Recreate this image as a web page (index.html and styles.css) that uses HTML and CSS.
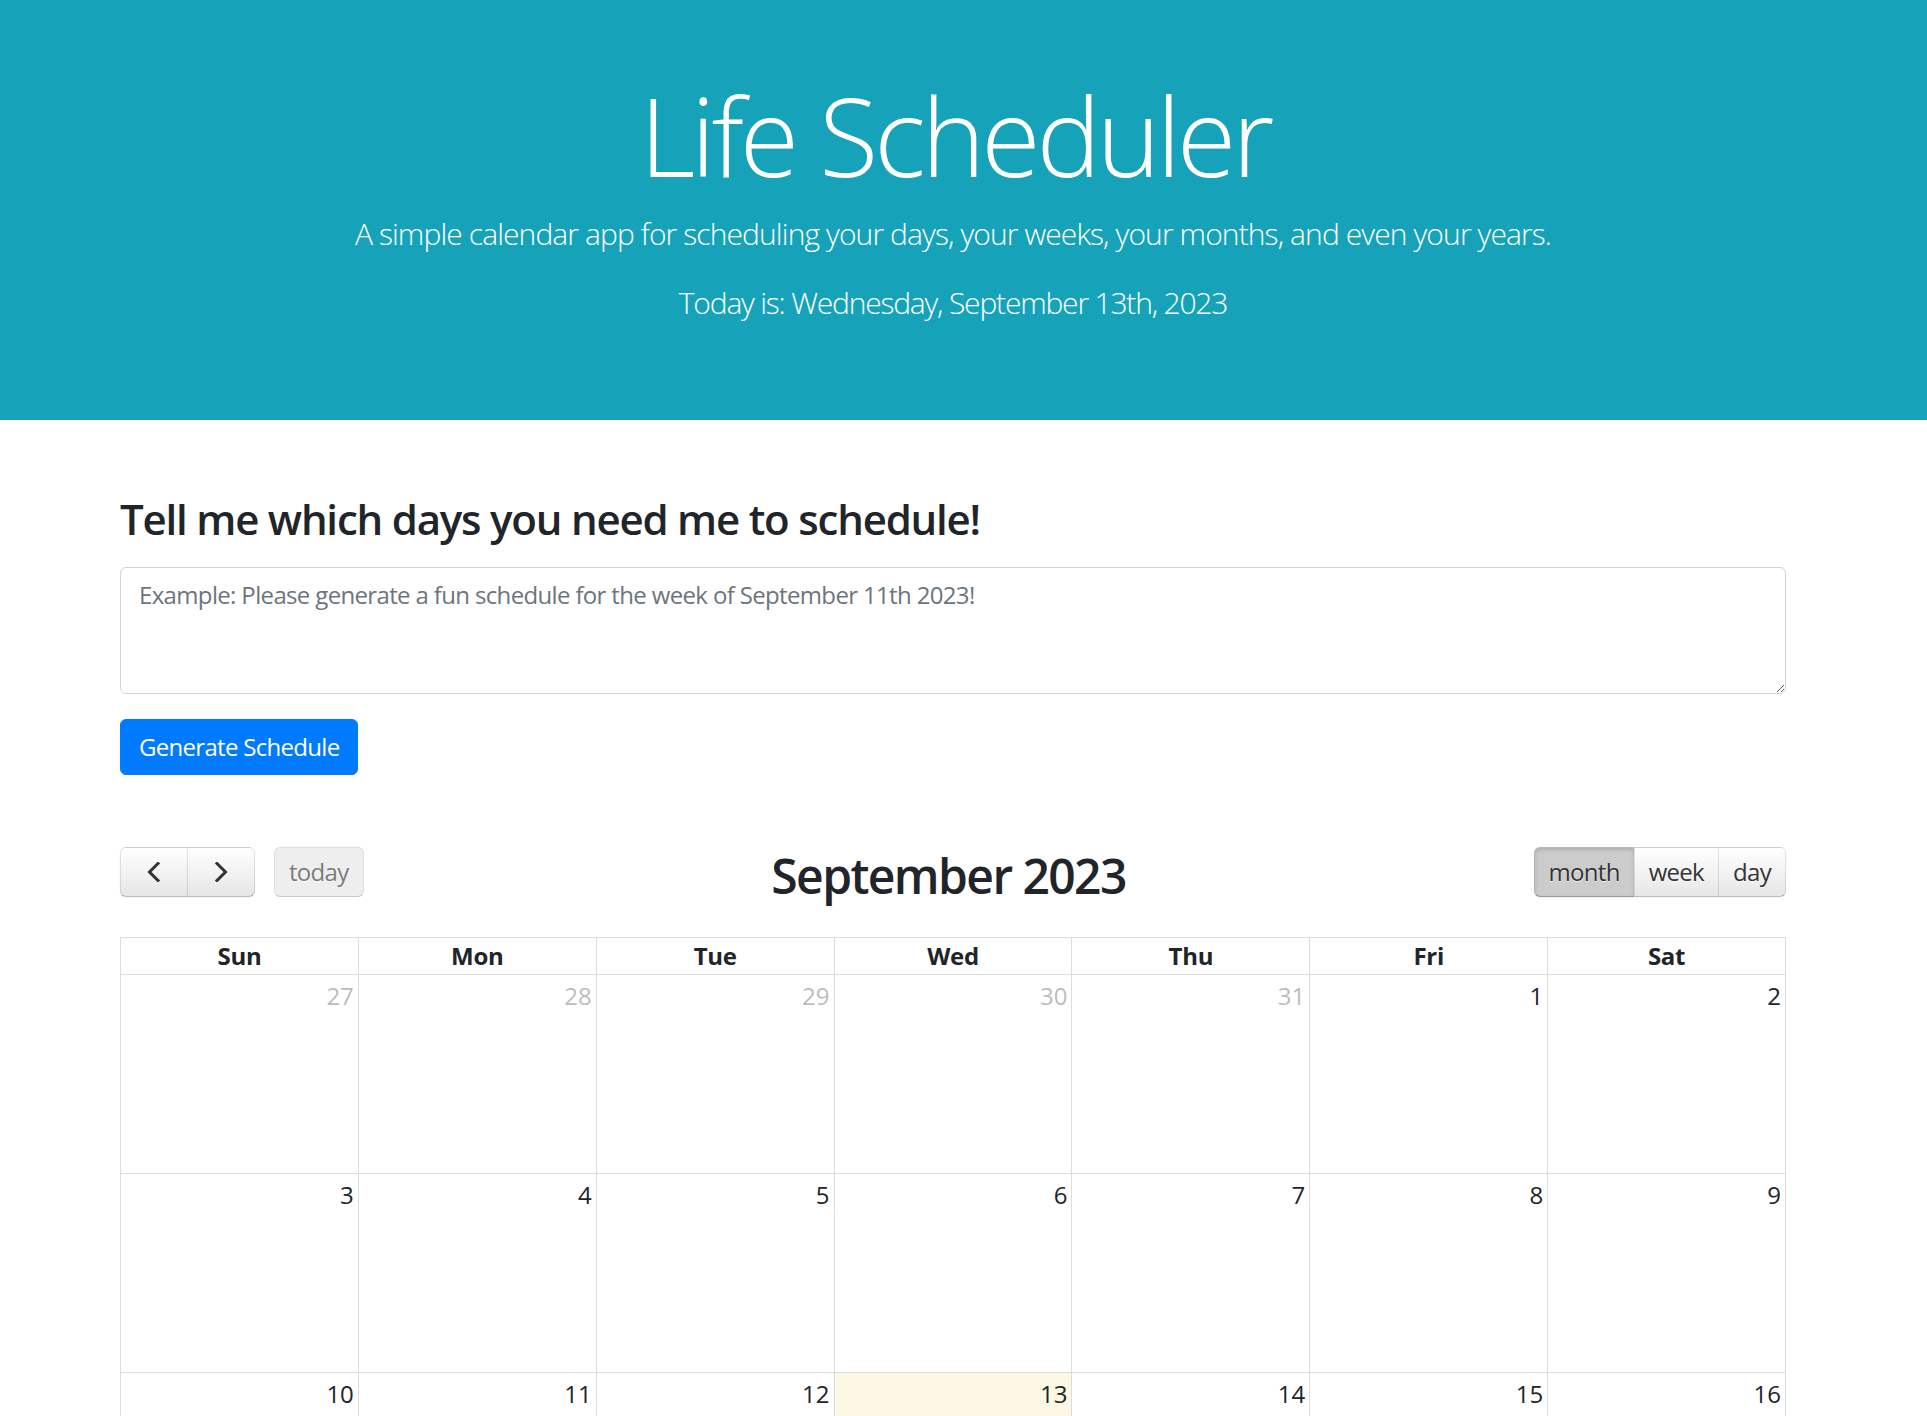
FILE: index.html
```html
<!DOCTYPE html>
<html lang="en">
<head>
<meta charset="utf-8">
<title>Life Scheduler</title>
<link rel="stylesheet" href="styles.css">
</head>
<body>
<header class="jumbotron">
  <div class="jumbo-inner">
    <h1 class="display-title">Life Scheduler</h1>
    <p class="lead lead-sub">A simple calendar app for scheduling your days, your weeks, your months, and even your years.</p>
    <p class="lead lead-today">Today is: Wednesday, September 13th, 2023</p>
  </div>
</header>
<main class="page">
  <div class="container">
    <h3 class="prompt-title">Tell me which days you need me to schedule!</h3>
    <textarea class="prompt-input" placeholder="Example: Please generate a fun schedule for the week of September 11th 2023!"></textarea>
    <button class="btn-primary" type="button">Generate Schedule</button>

    <section class="calendar">
      <div class="toolbar">
        <div class="tb-left">
          <div class="btn-group">
            <button class="fc-btn fc-arrow" type="button" aria-label="prev">
              <svg width="16" height="20" viewBox="0 0 16 20"><polyline points="12,1.5 3.5,10 12,18.5" fill="none" stroke="#333" stroke-width="3" stroke-linecap="square"/></svg>
            </button>
            <button class="fc-btn fc-arrow" type="button" aria-label="next">
              <svg width="16" height="20" viewBox="0 0 16 20"><polyline points="4,1.5 12.5,10 4,18.5" fill="none" stroke="#333" stroke-width="3" stroke-linecap="square"/></svg>
            </button>
          </div>
          <button class="fc-btn fc-today is-disabled" type="button">today</button>
        </div>
        <div class="tb-center"><h2 class="cal-title">September 2023</h2></div>
        <div class="tb-right">
          <div class="btn-group">
            <button class="fc-btn is-active" type="button">month</button>
            <button class="fc-btn" type="button">week</button>
            <button class="fc-btn" type="button">day</button>
          </div>
        </div>
      </div>

      <div class="month-grid">
        <div class="dow">Sun</div><div class="dow">Mon</div><div class="dow">Tue</div><div class="dow">Wed</div><div class="dow">Thu</div><div class="dow">Fri</div><div class="dow">Sat</div>

        <div class="day other"><span class="num">27</span></div>
        <div class="day other"><span class="num">28</span></div>
        <div class="day other"><span class="num">29</span></div>
        <div class="day other"><span class="num">30</span></div>
        <div class="day other"><span class="num">31</span></div>
        <div class="day"><span class="num">1</span></div>
        <div class="day"><span class="num">2</span></div>

        <div class="day"><span class="num">3</span></div>
        <div class="day"><span class="num">4</span></div>
        <div class="day"><span class="num">5</span></div>
        <div class="day"><span class="num">6</span></div>
        <div class="day"><span class="num">7</span></div>
        <div class="day"><span class="num">8</span></div>
        <div class="day"><span class="num">9</span></div>

        <div class="day"><span class="num">10</span></div>
        <div class="day"><span class="num">11</span></div>
        <div class="day"><span class="num">12</span></div>
        <div class="day today"><span class="num">13</span></div>
        <div class="day"><span class="num">14</span></div>
        <div class="day"><span class="num">15</span></div>
        <div class="day"><span class="num">16</span></div>

        <div class="day"><span class="num">17</span></div>
        <div class="day"><span class="num">18</span></div>
        <div class="day"><span class="num">19</span></div>
        <div class="day"><span class="num">20</span></div>
        <div class="day"><span class="num">21</span></div>
        <div class="day"><span class="num">22</span></div>
        <div class="day"><span class="num">23</span></div>

        <div class="day"><span class="num">24</span></div>
        <div class="day"><span class="num">25</span></div>
        <div class="day"><span class="num">26</span></div>
        <div class="day"><span class="num">27</span></div>
        <div class="day"><span class="num">28</span></div>
        <div class="day"><span class="num">29</span></div>
        <div class="day"><span class="num">30</span></div>

        <div class="day other"><span class="num">1</span></div>
        <div class="day other"><span class="num">2</span></div>
        <div class="day other"><span class="num">3</span></div>
        <div class="day other"><span class="num">4</span></div>
        <div class="day other"><span class="num">5</span></div>
        <div class="day other"><span class="num">6</span></div>
        <div class="day other"><span class="num">7</span></div>
      </div>
    </section>
  </div>
</main>
</body>
</html>
```

FILE: styles.css
```css
html {
  scrollbar-width: none;
}
html::-webkit-scrollbar {
  display: none;
  width: 0;
}
body {
  margin: 0;
  font-family: "Open Sans", "Noto Sans", "DejaVu Sans", sans-serif;
  font-size: 24px;
  line-height: 1.5;
  color: #212529;
  background: #fff;
}

/* Jumbotron */
.jumbotron {
  background: #16a3b9;
  color: #fff;
  height: 420px;
  box-sizing: border-box;
  padding: 71px 21px 0 0;
}
.jumbo-inner {
  text-align: center;
}
.display-title {
  margin: 0;
  font-size: 108px;
  font-weight: 300;
  line-height: 130px;
  letter-spacing: -4px;
  text-indent: 4px;
}
.lead {
  margin: 10px 0 0;
  font-size: 30px;
  font-weight: 300;
  line-height: 45px;
}
.lead-sub {
  letter-spacing: -0.9px;
}
.lead-today {
  margin-top: 24px;
  letter-spacing: -1.2px;
}

/* Main */
.page {
  padding-right: 21px;
}
.container {
  width: 1666px;
  margin: 0 auto;
  padding-top: 74px;
}
.prompt-title {
  margin: 0 0 23px;
  font-size: 42px;
  font-weight: 600;
  line-height: 50px;
  letter-spacing: -1.2px;
}
.prompt-input {
  display: block;
  box-sizing: border-box;
  width: 100%;
  height: 127px;
  margin: 0;
  padding: 9px 18px;
  font: inherit;
  font-size: 24px;
  line-height: 36px;
  letter-spacing: -0.65px;
  color: #495057;
  border: 1px solid #ced4da;
  border-radius: 6px;
  background: #fff;
}
.prompt-input::placeholder {
  color: #6c757d;
  opacity: 1;
}
.btn-primary {
  display: block;
  margin-top: 25px;
  height: 56px;
  padding: 0 18px;
  font: inherit;
  font-size: 24px;
  line-height: 36px;
  letter-spacing: -0.7px;
  color: #fff;
  background: #007bff;
  border: 1px solid #007bff;
  border-radius: 6px;
}

/* Calendar */
.calendar {
  margin-top: 72px;
}
.toolbar {
  display: flex;
  align-items: flex-start;
  margin-bottom: 32px;
}
.tb-left, .tb-right {
  display: flex;
  align-items: center;
  gap: 19px;
}
.tb-center {
  flex: 1;
  text-align: center;
}
.cal-title {
  margin: 0;
  font-size: 48px;
  font-weight: 600;
  line-height: 58px;
  letter-spacing: -1.6px;
}
.btn-group {
  display: flex;
}
.btn-group .fc-btn + .fc-btn {
  margin-left: -1px;
}
.btn-group .fc-btn:not(:first-child) {
  border-top-left-radius: 0;
  border-bottom-left-radius: 0;
}
.btn-group .fc-btn:not(:last-child) {
  border-top-right-radius: 0;
  border-bottom-right-radius: 0;
}
.fc-btn {
  box-sizing: border-box;
  height: 50px;
  padding: 0 14px;
  font: inherit;
  font-size: 24px;
  line-height: 48px;
  letter-spacing: -0.7px;
  color: #333;
  background-color: #f5f5f5;
  background-image: linear-gradient(to bottom, #fff, #e6e6e6);
  border: 1px solid;
  border-color: rgba(0,0,0,.1) rgba(0,0,0,.1) rgba(0,0,0,.25);
  border-radius: 6px;
  text-shadow: 0 1px 1px rgba(255,255,255,.75);
  box-shadow: inset 0 1px 0 rgba(255,255,255,.2), 0 1px 2px rgba(0,0,0,.05);
  white-space: nowrap;
}
.fc-arrow {
  width: 68px;
  display: flex;
  align-items: center;
  justify-content: center;
  padding: 0;
}
.fc-arrow svg {
  display: block;
}
.is-disabled {
  opacity: .65;
  box-shadow: none;
  background-image: none;
  background-color: #e6e6e6;
}
.is-active {
  background-color: #ccc;
  background-image: none;
  box-shadow: inset 0 2px 4px rgba(0,0,0,.15), 0 1px 2px rgba(0,0,0,.05);
}

.month-grid {
  display: grid;
  grid-template-columns: repeat(7, 1fr);
  border-top: 1px solid #ddd;
  border-left: 1px solid #ddd;
}
.dow {
  text-align: center;
  font-weight: 700;
  line-height: 36px;
  letter-spacing: -0.3px;
  border-right: 1px solid #ddd;
  border-bottom: 1px solid #ddd;
}
.day {
  box-sizing: content-box;
  height: 195px;
  padding: 3px 4px 0 3px;
  text-align: right;
  border-right: 1px solid #ddd;
  border-bottom: 1px solid #ddd;
}
.day .num {
  display: inline-block;
  line-height: 36px;
}
.day.other .num {
  opacity: .3;
}
.day.today {
  background: #fcf8e3;
}
```
